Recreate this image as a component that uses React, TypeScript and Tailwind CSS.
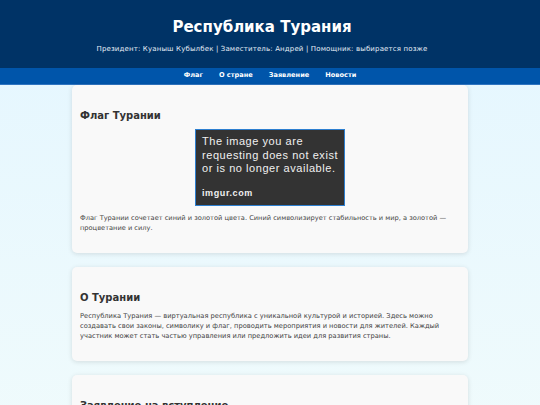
import React from "react";

const nav = ["Флаг", "О стране", "Заявление", "Новости"];

function Card({ title, children }: { title: string; children: React.ReactNode }) {
  return (
    <section className="mx-auto w-[396px] rounded-[5px] bg-[#f9f9f9] px-2 pt-[22px] pb-[20px] shadow-[0_1px_5px_rgba(0,0,0,0.12)]">
      <h2 className="mb-[4px] text-[10px] font-bold leading-[18px] text-[#333]">{title}</h2>
      {children}
    </section>
  );
}

export default function App() {
  return (
    <div
      className="min-h-[405px] bg-gradient-to-b from-[#e4f6ff] to-[#f0fbfc] text-[#444]"
      style={{ fontFamily: '"DejaVu Sans", Verdana, sans-serif' }}
    >
      <header className="h-[68px] bg-[#003366] pt-[17px] pr-[16px] text-center text-white">
        <h1 className="text-[15px] font-bold leading-[20px]">Республика Турания</h1>
        <p className="mt-[7px] text-[7px] leading-[10px] tracking-[0.15px] text-[#e6eef6]">
          Президент: Куаныш Кубылбек | Заместитель: Андрей | Помощник: выбирается позже
        </p>
      </header>
      <nav className="flex h-[17px] items-center justify-center gap-[12px] border-b border-[#2f74c0] bg-[#0055aa] text-[6.6px] font-bold text-white">
        {nav.map((n) => (
          <a key={n} href="#" className="px-[2px]">
            {n}
          </a>
        ))}
      </nav>

      <main className="flex flex-col gap-[14px]">
        <Card title="Флаг Турании">
          <div
            className="mx-auto mt-[1px] flex h-[77px] w-[150px] flex-col border border-[#2d7fd0] bg-[#333] px-[6px] pt-[5px] whitespace-nowrap text-[#f0f0f0]"
            style={{ fontFamily: '"Liberation Sans", Arial, sans-serif' }}
          >
            <p className="text-[11px] leading-[13.5px] tracking-[0.55px]">
              The image you are
              <br />
              requesting does not exist
              <br />
              or is no longer available.
            </p>
            <p className="mt-auto mb-[5px] text-[9px] font-semibold tracking-[0.6px]">imgur.com</p>
          </div>
          <p className="mt-[7px] text-[6.65px] leading-[10px]">
            Флаг Турании сочетает синий и золотой цвета. Синий символизирует стабильность и мир, а золотой — процветание и силу.
          </p>
        </Card>

        <Card title="О Турании">
          <p className="text-[6.7px] leading-[10px]">
            Республика Турания — виртуальная республика с уникальной культурой и историей. Здесь можно создавать свои законы, символику и флаг, проводить мероприятия и новости для жителей. Каждый участник может стать частью управления или предложить идеи для развития страны.
          </p>
        </Card>

        <Card title="Заявление на вступление">
          <p className="text-[6.7px] leading-[10px]">Заполните форму ниже, чтобы стать гражданином Турании.</p>
        </Card>
      </main>
    </div>
  );
}
